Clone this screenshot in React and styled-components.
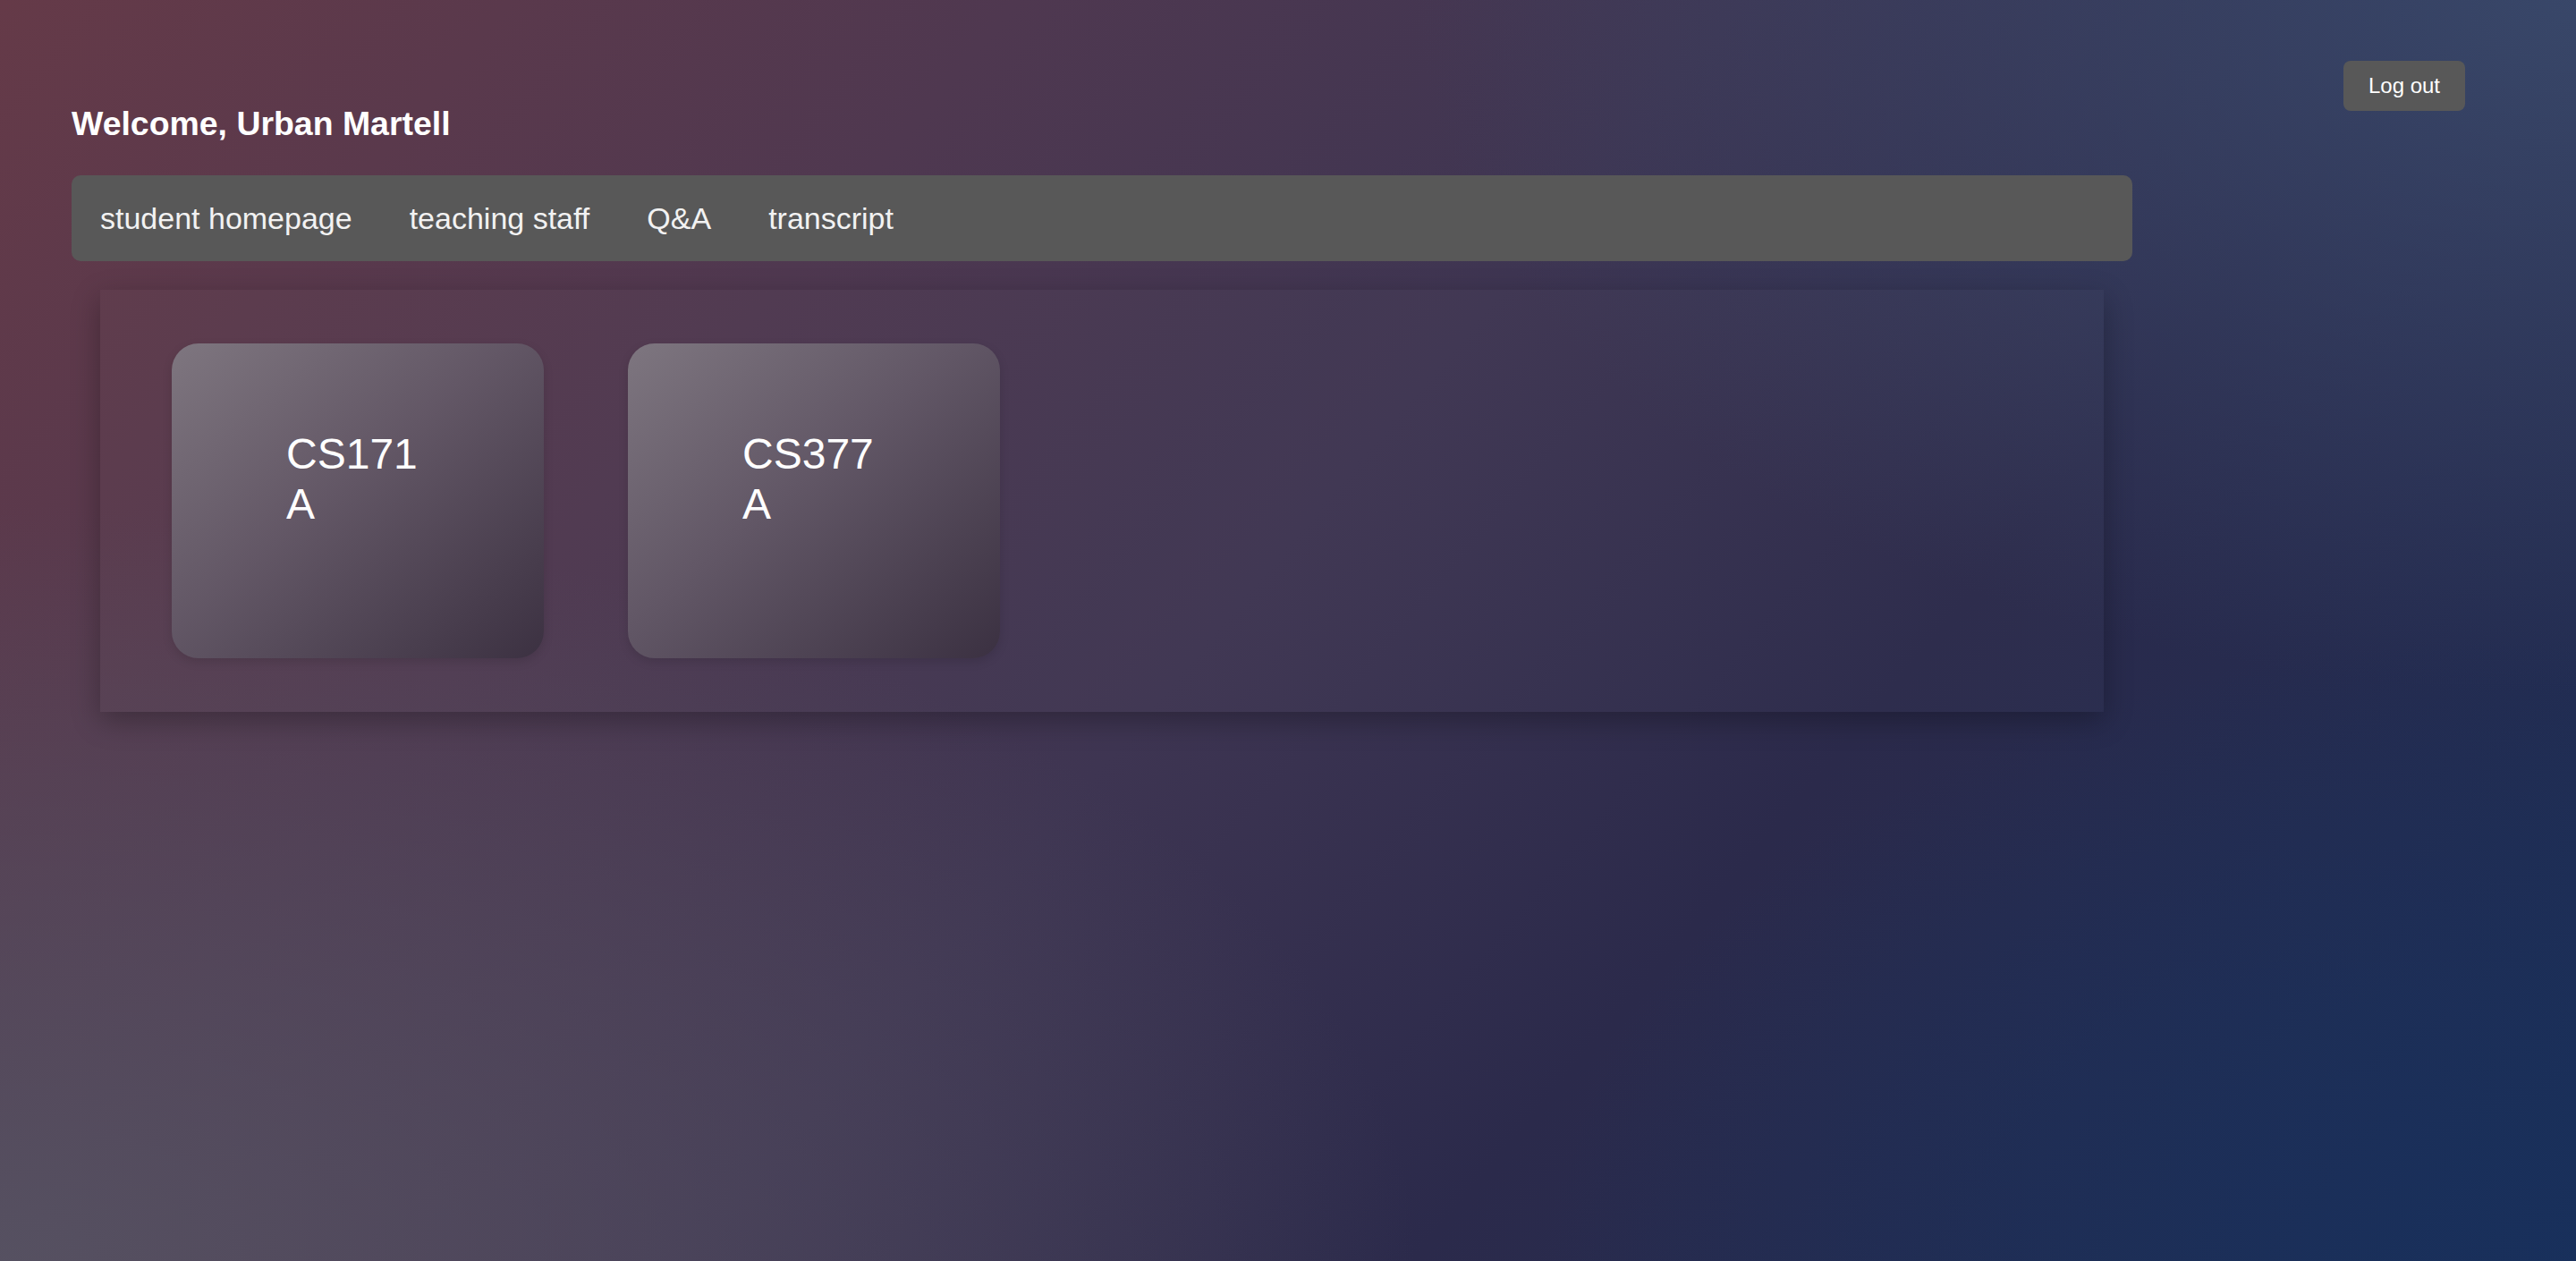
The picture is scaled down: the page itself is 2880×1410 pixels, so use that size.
import React from "react"
import styled, { createGlobalStyle } from "styled-components"

const GlobalStyle = createGlobalStyle`
	html, body {
		margin: 0;
		padding: 0;
	}
	body {
		font-family: "Liberation Sans", Arial, sans-serif;
		color: #fff;
	}
`

const courses = [
	{ code: "CS171", section: "A" },
	{ code: "CS377", section: "A" },
]

const navItems = ["student homepage", "teaching staff", "Q&A", "transcript"]

const App = () => {
	return (
		<>
			<GlobalStyle />
			<Page>
				<Header>
					<Welcome>Welcome, Urban Martell</Welcome>
					<LogoutButton>Log out</LogoutButton>
				</Header>
				<Main>
					<NavBar>
						{navItems.map((item) => (
							<NavLink key={item}>{item}</NavLink>
						))}
					</NavBar>
					<Panel>
						{courses.map((c) => (
							<CourseCard key={c.code}>
								<CourseTitle>
									{c.code} {c.section}
								</CourseTitle>
							</CourseCard>
						))}
					</Panel>
				</Main>
			</Page>
		</>
	)
}

export default App

const Page = styled.div`
	min-height: 1410px;
	box-sizing: border-box;
	padding: 68px 80px 0;
	background:
		radial-gradient(ellipse 55% 60% at 0% 100%, rgba(86, 82, 98, 0.95) 0%, rgba(86, 82, 98, 0) 100%),
		radial-gradient(ellipse 45% 55% at 100% 0%, rgba(58, 74, 108, 0.9) 0%, rgba(58, 74, 108, 0) 100%),
		radial-gradient(ellipse 40% 50% at 100% 100%, rgba(24, 48, 92, 0.9) 0%, rgba(24, 48, 92, 0) 100%),
		linear-gradient(130deg, #653a48 0%, #4f3850 28%, #3e3552 48%, #2b2a4b 68%, #1c2e56 100%);
`

const Header = styled.div`
	display: flex;
	justify-content: space-between;
	align-items: flex-start;
`

const Welcome = styled.h3`
	margin: 49px 0 0;
	font-size: 37.44px;
	font-weight: bold;
	line-height: 43px;
	color: #fff;
`

const LogoutButton = styled.button`
	margin-right: 44px;
	width: 136px;
	height: 56px;
	border: none;
	border-radius: 8px;
	background: #585858;
	color: #fff;
	font-family: "Liberation Sans", Arial, sans-serif;
	font-size: 24px;
	cursor: pointer;
`

const Main = styled.div`
	width: 2304px;
	margin-top: 36px;
`

const NavBar = styled.nav`
	display: flex;
	align-items: center;
	gap: 64px;
	height: 96px;
	padding: 0 32px;
	background: #585858;
	border-radius: 10px;
`

const NavLink = styled.a`
	font-size: 34px;
	color: #f2f2f2;
	cursor: pointer;
`

const Panel = styled.div`
	display: flex;
	gap: 94px;
	margin: 32px 32px 0;
	padding: 60px 80px;
	background: rgba(255, 255, 255, 0.015);
	box-shadow: 0 10px 30px rgba(0, 0, 0, 0.28);
`

const CourseCard = styled.div`
	width: 416px;
	height: 352px;
	box-sizing: border-box;
	padding: 96px 128px 0;
	border-radius: 30px;
	background: linear-gradient(
		140deg,
		rgba(128, 121, 130, 0.95) 0%,
		rgba(100, 90, 104, 0.9) 45%,
		rgba(58, 48, 64, 0.92) 100%
	);
	box-shadow: 0 4px 12px rgba(0, 0, 0, 0.12);
`

const CourseTitle = styled.h2`
	margin: 0;
	font-size: 48px;
	font-weight: normal;
	line-height: 56px;
	color: #fff;
`
